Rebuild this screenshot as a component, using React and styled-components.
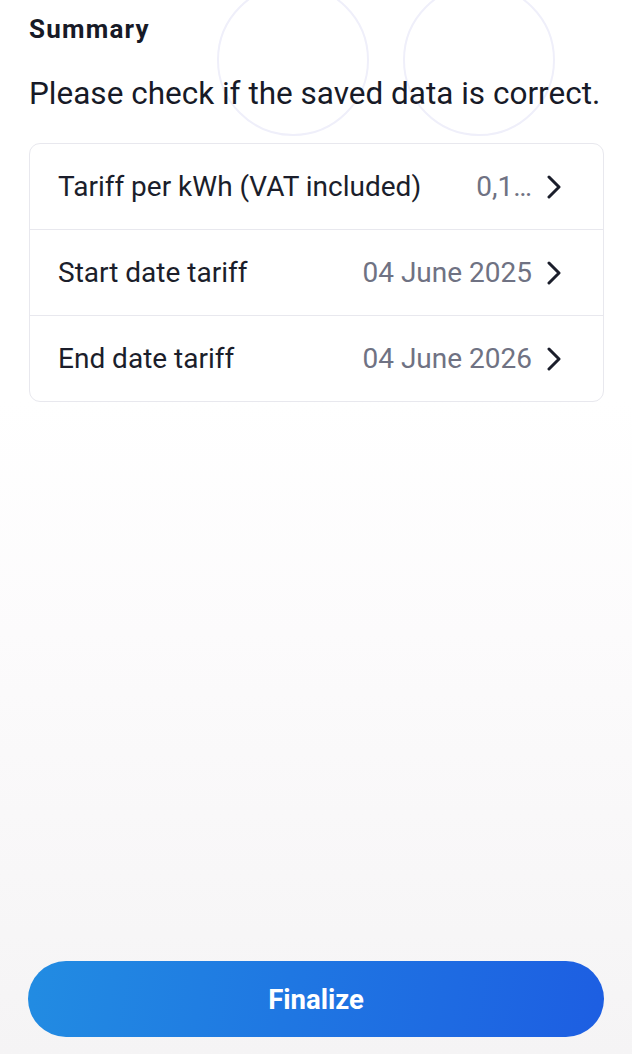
import React from 'react'
import styled, { createGlobalStyle } from 'styled-components'

const Global = createGlobalStyle`
  html, body {
    margin: 0;
    padding: 0;
  }
  body {
    font-family: Roboto, 'Noto Sans', Arial, sans-serif;
    background: #fff;
  }
`

const rows = [
  { label: 'Tariff per kWh (VAT included)', value: '0,1…' },
  { label: 'Start date tariff', value: '04 June 2025' },
  { label: 'End date tariff', value: '04 June 2026' },
]

function Chevron() {
  return (
    <svg width="16" height="24" viewBox="0 0 16 24" fill="none">
      <path d="M3 2 L13 12 L3 22" stroke="#1b1e2b" strokeWidth="3" strokeLinecap="round" strokeLinejoin="round" />
    </svg>
  )
}

export default function App() {
  return (
    <Page>
      <Global />
      <Deco>
        <Ring />
        <Ring />
      </Deco>
      <Content>
        <Title>Summary</Title>
        <Lead>Please check if the saved data is correct.</Lead>
        <Card>
          {rows.map((r) => (
            <Row key={r.label}>
              <Label>{r.label}</Label>
              <Value>{r.value}</Value>
              <Chevron />
            </Row>
          ))}
        </Card>
      </Content>
      <Footer>
        <Button>Finalize</Button>
      </Footer>
    </Page>
  )
}

const Page = styled.div`
  position: relative;
  height: 1054px;
  display: flex;
  flex-direction: column;
  box-sizing: border-box;
  overflow: hidden;
  background: linear-gradient(180deg, #ffffff 0%, #ffffff 38%, #fcfbfc 60%, #f5f4f5 100%);
`

const Deco = styled.div`
  position: absolute;
  top: -16px;
  left: 217px;
  display: flex;
  gap: 34px;
  pointer-events: none;
`

const Ring = styled.div`
  width: 148px;
  height: 148px;
  border-radius: 50%;
  border: 2px solid #efeffa;
`

const Content = styled.div`
  position: relative;
  flex: 1;
  padding: 13px 29px 0 29px;
`

const Title = styled.div`
  font-size: 26px;
  font-weight: 700;
  letter-spacing: 1.2px;
  color: #171a27;
  line-height: 32px;
`

const Lead = styled.div`
  margin-top: 31px;
  font-size: 31.5px;
  color: #171a27;
  line-height: 36px;
`

const Card = styled.div`
  box-sizing: border-box;
  margin-top: 31px;
  width: 575px;
  background: #fff;
  border: 1.5px solid #e8e8ee;
  border-radius: 11px;
  overflow: hidden;
`

const Row = styled.div`
  display: flex;
  align-items: center;
  height: 85px;
  padding: 0 41px 0 28px;
  border-top: 1.5px solid #e8e8ee;
  &:first-child {
    border-top: 0;
  }
`

const Label = styled.div`
  flex: 1;
  font-size: 28px;
  color: #1b1e2b;
  white-space: nowrap;
`

const Value = styled.div`
  font-size: 28px;
  color: #6f7283;
  margin-right: 14px;
  white-space: nowrap;
`

const Footer = styled.div`
  position: relative;
  padding: 0 28px 17px 28px;
`

const Button = styled.button`
  width: 100%;
  height: 76px;
  border: 0;
  border-radius: 38px;
  background: linear-gradient(100deg, #228ce2 0%, #1f77e2 45%, #1d5ee2 100%);
  color: #fff;
  font-family: Roboto, 'Noto Sans', Arial, sans-serif;
  font-size: 27.5px;
  font-weight: 700;
`
